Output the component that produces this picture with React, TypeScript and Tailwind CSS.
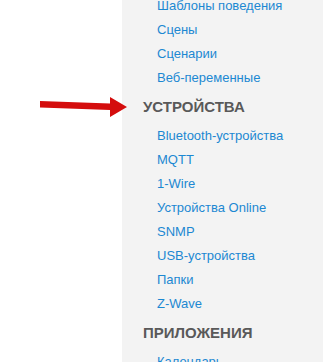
import React from 'react';

const sections = [
  {
    title: null as string | null,
    items: ['Шаблоны поведения', 'Сцены', 'Сценарии', 'Веб-переменные'],
  },
  {
    title: 'УСТРОЙСТВА',
    items: [
      'Bluetooth-устройства',
      'MQTT',
      '1-Wire',
      'Устройства Online',
      'SNMP',
      'USB-устройства',
      'Папки',
      'Z-Wave',
    ],
  },
  {
    title: 'ПРИЛОЖЕНИЯ',
    items: ['Календарь', 'Каналы'],
  },
];

const App: React.FC = () => {
  return (
    <div className="relative flex w-[323px] h-[362px] overflow-hidden bg-white font-['Liberation_Sans',Arial,sans-serif]">
      {/* annotation arrow */}
      <svg className="absolute left-[38px] top-[95px]" width="92" height="24" viewBox="0 0 92 24">
        <polygon
          points="2,6 72,8.5 72,2 89,12 72,22 72,15 2,12.5"
          fill="#d40d0d"
        />
      </svg>

      <div className="w-[122px] shrink-0" />

      <div className="flex-1 bg-[#f3f3f3]">
        <div className="mt-[-6px]">
          {sections.map((sec, i) => (
            <div key={i}>
              {sec.title && (
                <div className="h-[34px] leading-[34px] pl-[21px] text-[15px] font-bold text-[#595959]">
                  {sec.title}
                </div>
              )}
              <ul>
                {sec.items.map((item) => (
                  <li key={item} className="h-[24px] leading-[24px] pl-[35px] text-[13px] text-[#1c88d2]">
                    {item}
                  </li>
                ))}
              </ul>
            </div>
          ))}
        </div>
      </div>
    </div>
  );
};

export default App;
